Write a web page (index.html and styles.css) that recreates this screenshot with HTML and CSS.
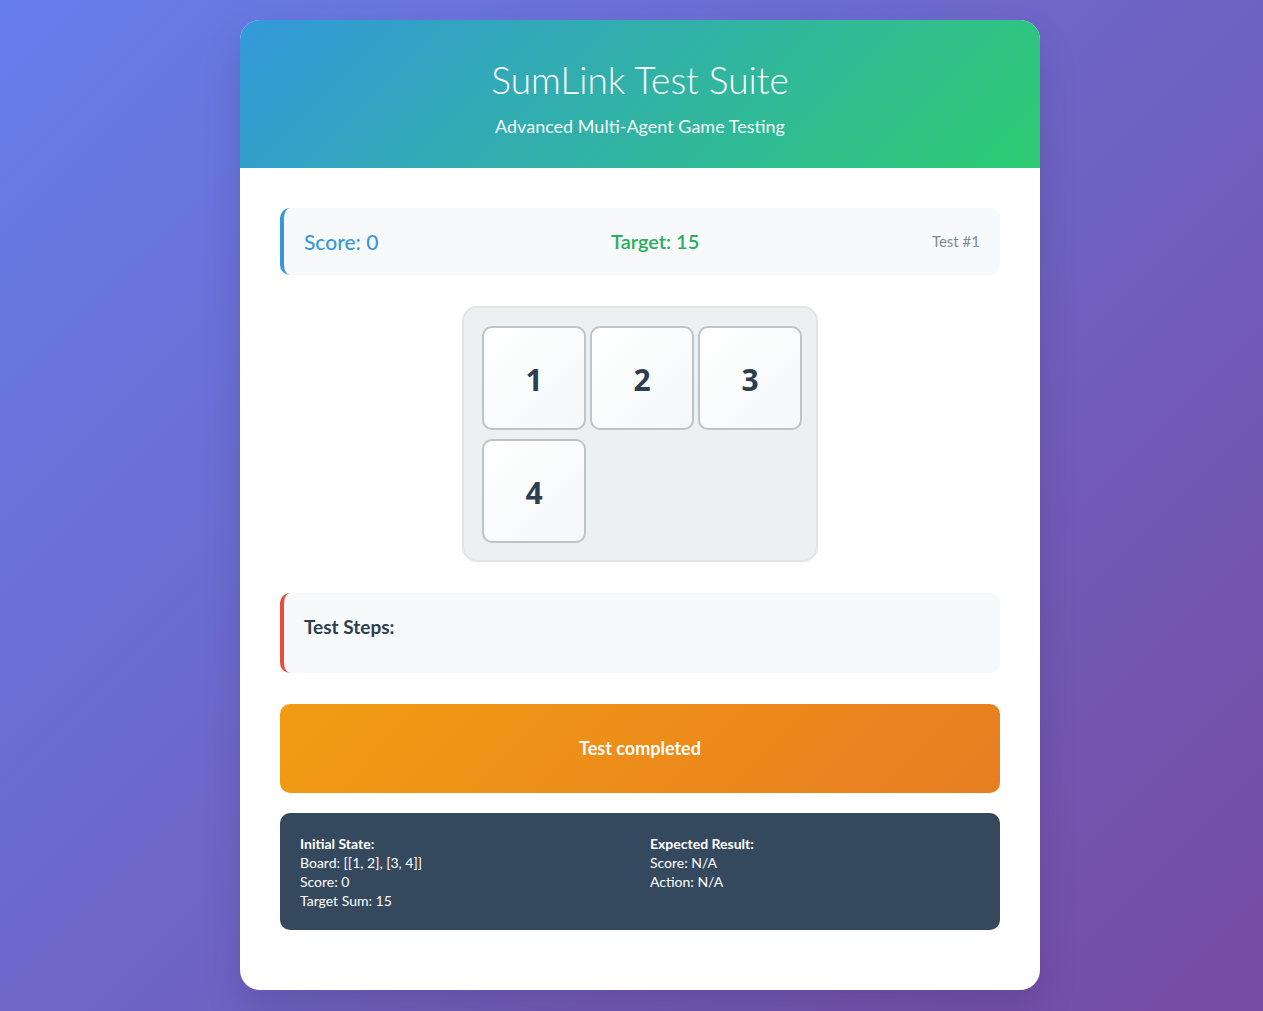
FILE: index.html
```html
<!DOCTYPE html>
<html lang="en">
<head>
<meta charset="utf-8">
<title>SumLink Test Suite</title>
<link rel="stylesheet" href="styles.css">
</head>
<body>
<div class="container">
  <header class="header">
    <h1 class="title">SumLink Test Suite</h1>
    <p class="subtitle">Advanced Multi-Agent Game Testing</p>
  </header>
  <main class="content">
    <div class="status">
      <span class="score">Score: 0</span>
      <span class="target">Target: 15</span>
      <span class="test-no">Test #1</span>
    </div>
    <div class="board-wrap">
      <div class="board">
        <div class="tile">1</div>
        <div class="tile">2</div>
        <div class="tile">3</div>
        <div class="tile">4</div>
      </div>
    </div>
    <div class="steps">
      <h3 class="steps-title">Test Steps:</h3>
    </div>
    <div class="result">Test completed</div>
    <div class="info">
      <div class="info-col">
        <div class="info-head">Initial State:</div>
        <div>Board: [[1, 2], [3, 4]]</div>
        <div>Score: 0</div>
        <div>Target Sum: 15</div>
      </div>
      <div class="info-col">
        <div class="info-head">Expected Result:</div>
        <div>Score: N/A</div>
        <div>Action: N/A</div>
      </div>
    </div>
  </main>
</div>
</body>
</html>
```
FILE: styles.css
```css
* { box-sizing: border-box; }
html, body { margin: 0; }
body {
  font-family: "Lato", "Noto Sans", sans-serif;
  background: linear-gradient(135deg, #667eea 0%, #764ba2 100%);
  min-height: 100vh;
  padding: 20px 3px 20px 20px;
  color: #2c3e50;
}
.container {
  width: 800px;
  margin: 0 auto;
  background: #fff;
  border-radius: 20px;
  overflow: hidden;
  box-shadow: 0 20px 40px rgba(0,0,0,0.12);
}
.header {
  background: linear-gradient(135deg, #3498db 0%, #2ecc71 100%);
  color: #fff;
  text-align: center;
  padding: 38px 20px 31px;
}
.title {
  margin: 0 0 13px;
  font-size: 37px;
  font-weight: 300;
  line-height: 44px;
}
.subtitle {
  margin: 0;
  font-size: 18px;
  line-height: 22px;
  opacity: 0.95;
}
.content { padding: 40px; }
.status {
  display: flex;
  justify-content: space-between;
  align-items: center;
  background: #f8f9fa;
  border-left: 4px solid #3498db;
  border-radius: 10px;
  padding: 20px;
  line-height: 27px;
  margin-bottom: 31px;
}
.score { font-size: 21px; color: #3498db; font-weight: 500; }
.target { font-size: 20px; color: #27ae60; font-weight: 600; }
.test-no { font-size: 15px; color: #7f8c8d; font-weight: 400; }
.board-wrap { display: flex; justify-content: center; margin-bottom: 31px; }
.board {
  display: grid;
  grid-template-columns: repeat(3, 104px);
  grid-auto-rows: 104px;
  column-gap: 4px;
  row-gap: 9px;
  padding: 18px 14px 17px 18px;
  background: #ecf0f1;
  border: 2px solid #e1e5e7;
  border-radius: 15px;
}
.tile {
  display: flex;
  align-items: center;
  justify-content: center;
  background: linear-gradient(135deg, #ffffff 0%, #f5f7f8 100%);
  border: 2px solid #bdc3c7;
  border-radius: 10px;
  font-family: "Open Sans", "Noto Sans", sans-serif;
  font-size: 30px;
  font-weight: 700;
  color: #2c3e50;
  padding-top: 2px;
}
.steps {
  background: #f8f9fa;
  border-left: 4px solid #e74c3c;
  border-radius: 10px;
  padding: 20px 20px 32px;
  margin-bottom: 31px;
}
.steps-title {
  margin: 0;
  font-size: 19px;
  font-weight: 700;
  line-height: 28px;
}
.result {
  background: linear-gradient(135deg, #f39c12 0%, #e67e22 100%);
  color: #fff;
  border-radius: 10px;
  padding: 30px;
  text-align: center;
  font-size: 18px;
  font-weight: 700;
  line-height: 29px;
  margin-bottom: 20px;
}
.info {
  display: grid;
  grid-template-columns: 1fr 1fr;
  column-gap: 20px;
  background: #34495e;
  color: #fff;
  border-radius: 10px;
  padding: 21px 20px 20px;
  font-size: 14px;
  line-height: 19px;
  margin-bottom: 20px;
}
.info-head { font-weight: 700; }
```
